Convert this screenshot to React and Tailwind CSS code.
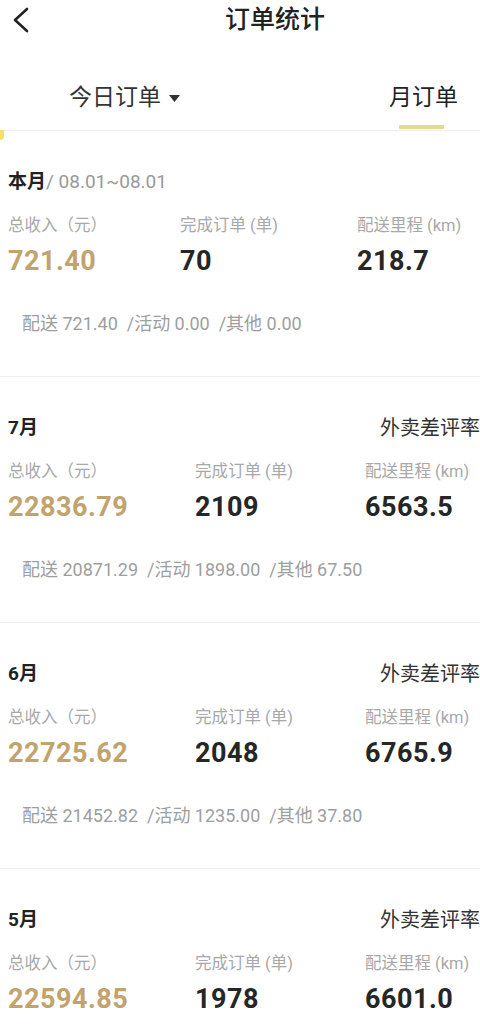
import React from 'react';

const months = [
  {
    title: '本月',
    range: '08.01~08.01',
    income: '721.40',
    orders: '70',
    distance: '218.7',
    breakdown: '配送 721.40  /活动 0.00  /其他 0.00',
    cols: 'grid-cols-[172px_177px_1fr]',
  },
  {
    title: '7月',
    income: '22836.79',
    orders: '2109',
    distance: '6563.5',
    breakdown: '配送 20871.29  /活动 1898.00  /其他 67.50',
    cols: 'grid-cols-[187px_170px_1fr]',
  },
  {
    title: '6月',
    income: '22725.62',
    orders: '2048',
    distance: '6765.9',
    breakdown: '配送 21452.82  /活动 1235.00  /其他 37.80',
    cols: 'grid-cols-[187px_170px_1fr]',
  },
  {
    title: '5月',
    income: '22594.85',
    orders: '1978',
    distance: '6601.0',
    breakdown: '',
    cols: 'grid-cols-[187px_170px_1fr]',
  },
];

function MonthBlock({ m }) {
  return (
    <div className="h-[246px] border-b border-[#efefef] pl-2 pt-[38px]">
      <div className="flex items-center justify-between h-[26px]">
        <div className="text-[19px] font-bold text-[#222] whitespace-nowrap">
          {m.title}
          {m.range && <span className="font-normal text-[#999]">/ {m.range}</span>}
        </div>
        {!m.range && (
          <div className="text-[20px] text-[#333] whitespace-nowrap">外卖差评率</div>
        )}
      </div>
      <div className={`grid ${m.cols} mt-[21px]`}>
        {[
          ['总收入（元）', m.income, 'text-[#c2a36c]'],
          ['完成订单 (单)', m.orders, 'text-[#262626]'],
          ['配送里程 (km)', m.distance, 'text-[#262626]'],
        ].map(([label, value, color]) => (
          <div key={label}>
            <div className="text-[16.5px] leading-[20px] text-[#a8a8a8] whitespace-nowrap">{label}</div>
            <div className={`text-[27px] leading-[32px] mt-[9px] font-bold tracking-[0.5px] ${color}`}>
              {value}
            </div>
          </div>
        ))}
      </div>
      {m.breakdown && (
        <div className="mt-[36px] pl-[14px] text-[18px] leading-[22px] text-[#9e9e9e] whitespace-pre">
          {m.breakdown}
        </div>
      )}
    </div>
  );
}

export default function App() {
  return (
    <div
      className="w-[480px] h-[1030px] overflow-hidden bg-white"
      style={{ fontFamily: 'Roboto, "Noto Sans CJK SC", sans-serif' }}
    >
      {/* header */}
      <div className="relative h-[46px] flex items-center">
        <svg className="absolute left-[10px] top-[6px]" width="22" height="28" viewBox="0 0 22 28" fill="none">
          <path d="M17 3L5 14l12 11" stroke="#222" strokeWidth="2.6" strokeLinecap="round" strokeLinejoin="round" />
        </svg>
        <div className="w-full pl-[225px] text-[25px] font-medium text-[#222] -mt-[6px]">订单统计</div>
      </div>

      {/* tabs */}
      <div className="relative h-[85px] border-b border-[#eeeeee] flex items-center">
        <div className="pl-[69px] flex items-center gap-[8px] text-[23px] text-[#333] mt-[20px]">
          今日订单
          <svg width="11" height="7" viewBox="0 0 11 7">
            <path d="M0 0h11L5.5 7z" fill="#333" />
          </svg>
        </div>
        <div className="ml-auto pr-[22px] text-[23px] text-[#222] mt-[20px]">月订单</div>
        <div className="absolute left-[399px] bottom-[1px] w-[45px] h-[4px] bg-[#e5d98a] rounded-[1px]" />
        <div className="absolute left-0 -bottom-[10px] w-[4px] h-[10px] bg-[#f2e06a] rounded-br-[4px]" />
      </div>

      {months.map((m) => (
        <MonthBlock key={m.title} m={m} />
      ))}
    </div>
  );
}
